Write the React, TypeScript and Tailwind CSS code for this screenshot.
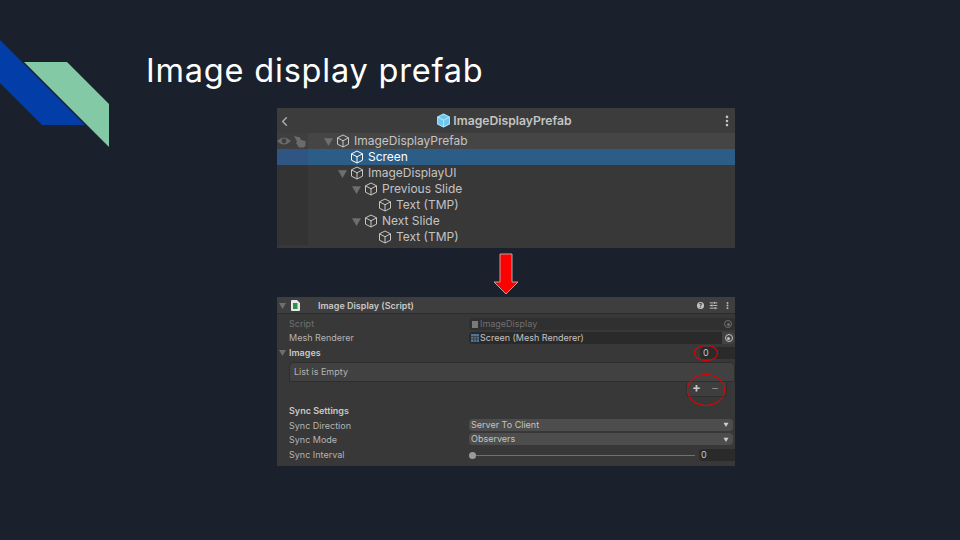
import { EllipsisVertical, ChevronLeft, SlidersHorizontal } from 'lucide-react'

function Cube({ className, fill = 'none', color = '#c8c8c8' }: { className?: string; fill?: string; color?: string }) {
  return (
    <svg viewBox="0 0 14 14" className={className} fill={fill} stroke={color} strokeWidth="1" strokeLinejoin="round">
      <path d="M7 1 L12.5 3.8 V10.2 L7 13 L1.5 10.2 V3.8 Z" />
      <path d="M1.5 3.8 L7 6.8 L12.5 3.8 M7 6.8 V13" />
    </svg>
  )
}

function Caret({ className }: { className?: string }) {
  return (
    <svg viewBox="0 0 8 8" className={className}>
      <path d="M0 1 H8 L4 8 Z" fill="currentColor" />
    </svg>
  )
}

function TreeRow({ depth, label, open, selected, first }: { depth: number; label: string; open?: boolean; selected?: boolean; first?: boolean }) {
  const indents = ['w-[16px]', 'w-[30px]', 'w-[44px]', 'w-[58px]']
  return (
    <div className={`flex h-4 items-center ${selected ? 'bg-[#2c5d87] text-white' : first ? 'bg-[#454545] text-[#c4c4c4]' : 'text-[#c4c4c4]'}`}>
      <div className={`flex h-full w-[31px] shrink-0 items-center gap-[2px] ${selected ? 'bg-[#2f5583]' : first ? 'bg-[#3f3f3f]' : 'bg-[#333333]'}`}>
        {first && (
          <>
            <svg viewBox="0 0 14 10" className="h-[10px] w-[14px]">
              <path d="M0 5 Q7 -2 14 5 Q7 12 0 5 Z" fill="#6b6b6b" />
              <circle cx="7" cy="5" r="2.4" fill="#3f3f3f" />
            </svg>
            <svg viewBox="0 0 13 13" className="h-[13px] w-[13px]">
              <path d="M1 1 L7 2.5 L8 5 L12.5 6 V11 L10.5 12.5 H6 L3 8 L4 6.5 Z" fill="#6b6b6b" />
            </svg>
          </>
        )}
      </div>
      <div className={`${indents[depth]} shrink-0`} />
      <div className="w-[9px] shrink-0">{open && <Caret className="h-[9px] w-[9px] text-[#6e6e6e]" />}</div>
      <Cube className="ml-[3px] h-[14px] w-[14px] shrink-0" color={selected ? '#ffffff' : '#c8c8c8'} />
      <span className="ml-[4px] text-[12px] leading-4">{label}</span>
    </div>
  )
}

function Label({ children, bold, dim }: { children: string; bold?: boolean; dim?: boolean }) {
  return <div className={`text-[9px] leading-3 ${bold ? 'font-semibold text-[#c8c8c8]' : dim ? 'text-[#6f6f6f]' : 'text-[#b4b4b4]'}`}>{children}</div>
}

function Dropdown({ value }: { value: string }) {
  return (
    <div className="mb-[2px] flex h-3 w-[264px] items-center justify-between rounded-sm bg-[#4d4d4d] px-[2px] text-[9px] leading-3 text-[#c4c4c4]">
      <span>{value}</span>
      <Caret className="mr-[2px] h-[5px] w-[6px] text-[#d0d0d0]" />
    </div>
  )
}

function Row({ label, right, short }: { label: React.ReactNode; right?: React.ReactNode; short?: boolean }) {
  return (
    <div className={`flex items-center ${short ? 'h-[14px]' : 'h-[14.6px]'}`}>
      <div className="w-[192px] shrink-0 pl-3">{label}</div>
      {right}
    </div>
  )
}

export default function App() {
  return (
    <div className="flex h-[540px] w-[960px] bg-[#1a212d] font-['Inter',sans-serif]">
      <svg viewBox="0 0 109 147" className="h-[147px] w-[109px] shrink-0">
        <polygon points="0,40 85,125 42,125 0,83" fill="#023da8" />
        <polygon points="24,62 67,62 109,104 109,147" fill="#84c9a5" />
      </svg>

      <div className="flex flex-col">
        <h1 className="ml-[37px] mt-[49px] h-[59px] text-[32.5px] leading-[44px] tracking-[0.8px] text-white">Image display prefab</h1>

        <div className="ml-[168px] w-[458px]">
          <div className="flex h-[25px] items-center justify-between bg-[#3c3c3c] pt-px text-[#c4c4c4]">
            <ChevronLeft className="h-[15px] w-[15px] text-[#a8a8a8]" strokeWidth={2.5} />
            <div className="mr-[4px] flex items-center gap-[2px]">
              <Cube className="h-[15px] w-[15px]" fill="#6ec6ec" color="#a8e4ff" />
              <span className="text-[12.2px] font-semibold">ImageDisplayPrefab</span>
            </div>
            <EllipsisVertical className="mr-[1px] h-[14px] w-[14px] text-[#c4c4c4]" strokeWidth={2.5} />
          </div>
          <div className="flex h-[115px] flex-col bg-[#383838]">
            <TreeRow depth={0} label="ImageDisplayPrefab" open first />
            <TreeRow depth={1} label="Screen" selected />
            <TreeRow depth={1} label="ImageDisplayUI" open />
            <TreeRow depth={2} label="Previous Slide" open />
            <TreeRow depth={3} label="Text (TMP)" />
            <TreeRow depth={2} label="Next Slide" open />
            <TreeRow depth={3} label="Text (TMP)" />
          </div>

          <div className="flex h-[49px] justify-center pt-[5px]">
            <svg viewBox="0 0 26 42" className="h-[42px] w-[26px]">
              <path d="M7 1 H19 V29 H25 L13 41 L1 29 H7 Z" fill="#ff0000" stroke="#b9a6a6" strokeWidth="1" />
            </svg>
          </div>

          <div className="relative flex h-[169px] flex-col bg-[#383838]">
            <div className="flex h-[17px] shrink-0 items-center border-b border-[#2c2c2c] bg-[#3e3e3e] pl-[2px] pr-[3px] pt-px">
              <Caret className="h-[7px] w-[7px] text-[#6e6e6e]" />
              <svg viewBox="0 0 9 11" className="ml-[5px] h-[11px] w-[9px]">
                <path d="M0 1 Q0 0 1 0 H6 L9 3 V10 Q9 11 8 11 H1 Q0 11 0 10 Z" fill="#e8e8e8" />
                <path d="M2 3 H6.5 V9 H2 Z" fill="#2f8f46" />
              </svg>
              <span className="ml-[18px] text-[9px] font-semibold text-[#c8c8c8]">Image Display (Script)</span>
              <div className="ml-auto flex items-center gap-[5px]">
                <div className="flex h-[7px] w-[7px] items-center justify-center rounded-full bg-[#c4c4c4] text-[6px] font-bold leading-none text-[#383838]">?</div>
                <SlidersHorizontal className="h-[9px] w-[9px] text-[#c4c4c4]" strokeWidth={2.5} />
                <EllipsisVertical className="h-[9px] w-[9px] text-[#c4c4c4]" strokeWidth={3} />
              </div>
            </div>

            <div className="h-[3px] shrink-0" />
            <Row
              short
              label={<Label dim>Script</Label>}
              right={
                <div className="flex h-3 flex-1 items-center gap-[2px] rounded-sm bg-[#303030] pl-[3px] pr-[3px] text-[9px] leading-3 text-[#6f6f6f]">
                  <div className="h-[7px] w-[6px] bg-[#7a7a7a]" />
                  <span>ImageDisplay</span>
                  <div className="ml-auto h-2 w-2 rounded-full border border-[#6f6f6f] p-[1.5px]"><div className="h-full w-full rounded-full bg-[#6f6f6f]" /></div>
                </div>
              }
            />
            <Row
              short
              label={<Label>Mesh Renderer</Label>}
              right={
                <div className="flex h-3 flex-1 items-center gap-[2px] rounded-sm bg-[#2a2a2a] pl-[2px] text-[9px] leading-3 text-[#c4c4c4]">
                  <svg viewBox="0 0 8 8" className="h-2 w-2">
                    <path d="M0 0 H8 V8 H0 Z" fill="#4f7596" />
                    <path d="M0 2.5 H8 M0 5 H8 M2.7 2.5 V8 M5.4 2.5 V8" stroke="#2a2a2a" strokeWidth="0.6" />
                  </svg>
                  <span className="-ml-px">Screen (Mesh Renderer)</span>
                  <div className="ml-auto flex h-3 w-[13px] items-center justify-center rounded-r-sm bg-[#424242]">
                    <div className="h-2 w-2 rounded-full border border-[#c4c4c4] p-[1.5px]"><div className="h-full w-full rounded-full bg-[#c4c4c4]" /></div>
                  </div>
                </div>
              }
            />
            <div className="flex h-[15px] items-center pl-[2px]">
              <Caret className="h-[7px] w-[7px] text-[#6e6e6e]" />
              <span className="ml-[3px] text-[9px] font-semibold text-[#c8c8c8]">Images</span>
              <div className="ml-auto flex h-3 w-[35px] items-center rounded-l-sm bg-[#2a2a2a] pl-[3px] text-[9px] leading-3 text-[#c4c4c4]">0</div>
            </div>

            <div className="ml-3 mt-[2px] flex h-5 shrink-0 items-center rounded-t-sm border border-[#2e2e2e] bg-[#414141] pl-[4px] text-[9px] leading-3 text-[#b4b4b4]">List is Empty</div>
            <div className="mr-2 flex h-[15px] w-[41px] shrink-0 items-center justify-center gap-[10px] self-end rounded-b-sm border-x border-b border-[#2e2e2e] bg-[#3e3e3e] pb-[3px] pr-[2px] text-[#c8c8c8]">
              <span className="text-[13px] font-bold leading-none">+</span>
              <span className="text-[12px] leading-none text-[#8a8a8a]">−</span>
            </div>

            <div className="h-[7px] shrink-0" />
            <Row label={<Label bold>Sync Settings</Label>} />
            <Row label={<Label>Sync Direction</Label>} right={<Dropdown value="Server To Client" />} />
            <Row label={<Label>Sync Mode</Label>} right={<Dropdown value="Observers" />} />
            <Row
              label={<Label>Sync Interval</Label>}
              right={
                <div className="flex flex-1 items-center">
                  <div className="h-[7px] w-[7px] shrink-0 rounded-full bg-[#9a9a9a]" />
                  <div className="h-px w-[219px] bg-[#707070]" />
                  <div className="ml-auto flex h-3 w-[36px] items-center rounded-l-sm bg-[#2a2a2a] pl-[2px] text-[9px] leading-3 text-[#c4c4c4]">0</div>
                </div>
              }
            />

            {/* red annotation circles drawn over the screenshot */}
            <div className="absolute left-[417px] top-[48px] h-4 w-6 rounded-[50%] border border-[#e50000]" />
            <div className="absolute left-[410px] top-[77px] h-8 w-[38px] rounded-[50%] border border-[#e50000]" />
          </div>
        </div>
      </div>
    </div>
  )
}
